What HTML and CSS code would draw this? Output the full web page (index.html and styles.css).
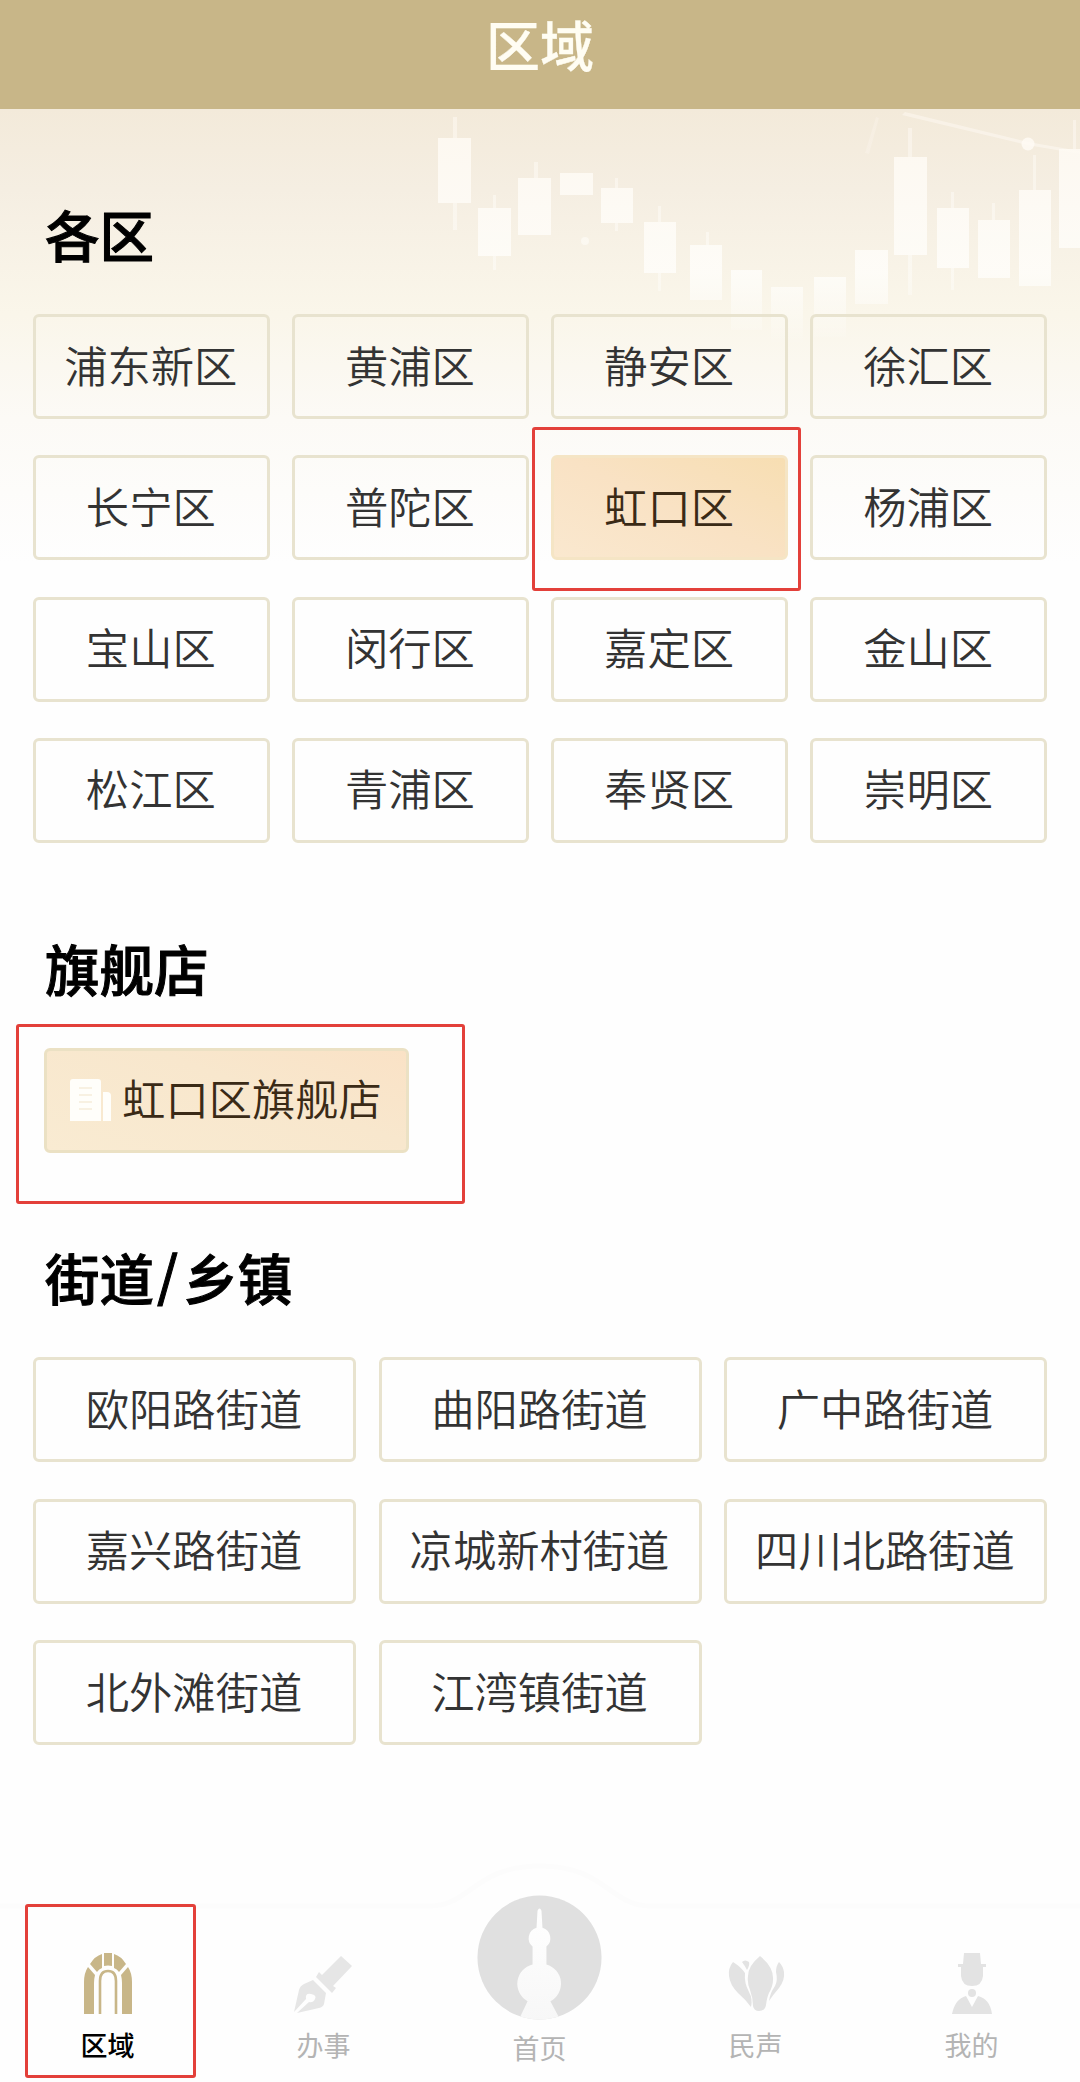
FILE: index.html
```html
<!DOCTYPE html>
<html lang="zh-CN">
<head>
  <meta charset="UTF-8" />
  <meta name="viewport" content="width=device-width, initial-scale=1.0" />
  <title>区域</title>
  <link rel="stylesheet" href="styles.css">
</head>
<body>
  <div class="page">
    <header class="header">区域</header>
    <main class="content">
      <svg class="chart" viewBox="400 108 680 240" aria-hidden="true">
        <defs>
          <linearGradient id="fade" gradientUnits="userSpaceOnUse" x1="0" y1="108" x2="0" y2="345">
            <stop offset="0" stop-color="#fffaf3" stop-opacity=".85" />
            <stop offset=".7" stop-color="#fffefb" stop-opacity=".8" />
            <stop offset="1" stop-color="#fff" stop-opacity="0" />
          </linearGradient>
        </defs>
        <g fill="url(#fade)">
          <path d="M438 138h33v65h-33zM478 208h33v48h-33zM518 178h33v57h-33zM560 173h33v22h-33zM601 188h32v35h-32zM644 222h32v51h-32zM690 245h32v55h-32zM731 270h31v60h-31zM771 287h32v55h-32zM814 277h32v60h-32zM855 250h33v54h-33zM894 157h33v98h-33zM937 208h32v60h-32zM978 220h32v58h-32zM1019 190h32v96h-32zM1059 149h21v99h-21z" />
          <g opacity=".6">
            <path d="M453 117h4v21h-4zM453 203h4v27h-4zM493 195h3v13h-3zM493 256h3v14h-3zM534 162h4v16h-4zM615 178h3v10h-3zM615 223h3v8h-3zM658 206h3v16h-3zM658 273h3v18h-3zM706 232h3v13h-3zM908 128h4v29h-4zM908 255h4v40h-4zM951 192h3v16h-3zM951 268h3v22h-3zM992 203h3v17h-3zM1033 155h3v35h-3zM1073 120h3v29h-3z" />
            <path d="M905 112l123 30 52 9v3l-53-9-125-30z" />
            <path d="M876 117l3 1-10 36-4-1z" opacity=".5" />
          </g>
          <circle cx="1028" cy="144" r="6.5" />
          <circle cx="585" cy="241" r="4" opacity=".7" />
        </g>
      </svg>

      <section class="section">
        <h2 class="title">各区</h2>
        <div class="grid grid-4">
          <div class="item">浦东新区</div>
          <div class="item">黄浦区</div>
          <div class="item">静安区</div>
          <div class="item">徐汇区</div>
          <div class="item">长宁区</div>
          <div class="item">普陀区</div>
          <div class="item active">虹口区<span class="mark mark-district"></span></div>
          <div class="item">杨浦区</div>
          <div class="item">宝山区</div>
          <div class="item">闵行区</div>
          <div class="item">嘉定区</div>
          <div class="item">金山区</div>
          <div class="item">松江区</div>
          <div class="item">青浦区</div>
          <div class="item">奉贤区</div>
          <div class="item">崇明区</div>
        </div>
      </section>

      <section class="section">
        <h2 class="title">旗舰店</h2>
        <div class="item store">
          <svg class="store-icon" viewBox="0 0 42 42">
            <path d="M3 0h25q3 0 3 3v39H0V3q0-3 3-3z" fill="#fffefa" />
            <path d="M33 13h4q4 0 4 4v25h-8z" fill="#fffefa" />
            <path d="M9 9h13M9 16h13M9 23h13M9 30h13" stroke="#f8f1e2" stroke-width="2" />
          </svg>
          <span>虹口区旗舰店</span>
          <span class="mark mark-store"></span>
        </div>
      </section>

      <section class="section">
        <h2 class="title">街道<span class="slash">/</span>乡镇</h2>
        <div class="grid grid-3">
          <div class="item">欧阳路街道</div>
          <div class="item">曲阳路街道</div>
          <div class="item">广中路街道</div>
          <div class="item">嘉兴路街道</div>
          <div class="item">凉城新村街道</div>
          <div class="item">四川北路街道</div>
          <div class="item">北外滩街道</div>
          <div class="item">江湾镇街道</div>
        </div>
      </section>
    </main>

    <nav class="tabbar">
      <svg class="tabbar-edge" viewBox="0 0 1080 60" aria-hidden="true">
        <path d="M0 48H430C470 48 475 8 540 8S610 48 650 48H1080" fill="none" stroke="#fcfcfc" stroke-width="5" />
      </svg>
      <a class="tab current">
        <svg class="tab-icon" viewBox="0 0 62 62">
          <g fill="#c8b688">
            <path d="M7 62V30Q7 21 11 15L18 23Q17 27 17 31V62z" />
            <path d="M55 62V30Q55 21 51 15L44 23Q45 27 45 31V62z" />
            <path d="M13 12Q18 4 25 2V16Q22 17 20 20z" />
            <path d="M49 12Q44 4 37 2V16Q40 17 42 20z" />
            <path d="M27 1H35V14Q31 13 27 14z" />
          </g>
          <path d="M23 62V29Q23 19 31 19T39 29V62" fill="none" stroke="#c8b688" stroke-width="2.6" />
        </svg>
        <span>区域</span>
        <span class="mark mark-tab"></span>
      </a>
      <a class="tab">
        <svg class="tab-icon" viewBox="0 0 62 62">
          <g fill="#e6e6e6">
            <path d="M48 4L59 14L40 34L43 36L39 41L23 25L26 20L29 23z" />
            <path d="M20 28L33 41L31 52Q30 55 26 56L4 61L16 50Q20 51 22 47T18 42T13 47L1 60L6 38Q7 34 11 32z" />
          </g>
        </svg>
        <span>办事</span>
      </a>
      <a class="tab home">
        <svg class="home-icon" viewBox="0 0 126 126">
          <defs>
            <clipPath id="round"><circle cx="63" cy="63" r="62.5" /></clipPath>
            <linearGradient id="tower" x1="0" y1="0" x2="0" y2="1">
              <stop offset="0" stop-color="#fff" />
              <stop offset="1" stop-color="#f7f7f7" />
            </linearGradient>
          </defs>
          <circle cx="63" cy="63" r="62.5" fill="#e0e0e0" />
          <path clip-path="url(#round)" fill="url(#tower)" d="M61 16Q63 11 65 16L66 33A11 11 0 0 1 70 52V70A20 20 0 0 1 74 107L84 126H42L51 107A20 20 0 0 1 56 70V52A11 11 0 0 1 60 33z" />
        </svg>
        <span>首页</span>
      </a>
      <a class="tab">
        <svg class="tab-icon" viewBox="0 0 62 62">
          <g fill="#e3e3e3">
            <path d="M35 4Q49 15 48 28Q48 34 44 41Q42 45 41 53Q40 59 34 59Q29 59 28 54Q28 46 25 38Q22 31 23 24Q23 14 35 4z" />
            <path d="M8 10Q3 16 4 24Q5 33 13 41Q20 47 26 55Q28 47 24 40Q19 31 20 21Q16 15 8 10z" />
            <path d="M54 10Q51 14 51 20Q53 28 50 34Q45 41 44 49Q48 43 54 36Q60 28 59 20Q58 14 54 10z" />
            <path d="M17 10Q20 7 24 10Q25 13 22 18Q20 14 17 10z" />
          </g>
        </svg>
        <span>民声</span>
      </a>
      <a class="tab">
        <svg class="tab-icon" viewBox="0 0 62 62">
          <g fill="#e3e3e3">
            <path d="M23 1H39L40 12H45V15H42V24Q41 34 31 34T20 24V15H17V12H22z" />
            <circle cx="31" cy="41" r="4" />
            <path d="M25 44L31 55L37 44Q49 47 51 62H11Q14 47 25 44z" />
          </g>
        </svg>
        <span>我的</span>
      </a>
    </nav>
  </div>
</body>
</html>
```
FILE: styles.css
```css
* { box-sizing: border-box; }
html, body { margin: 0; padding: 0; }
body { background: #fefefe; color: #333; font-family: "Noto Sans CJK SC", "Liberation Sans", sans-serif; }
.page { width: 1080px; height: 2082px; margin: 0 auto; display: flex; flex-direction: column; overflow: hidden; }
.header { height: 109px; padding-top: 8px; flex: none; background: #c8b688; color: #fffdf3; font-size: 54px; font-weight: 500; line-height: 72px; text-align: center; -webkit-text-stroke: 0.3px; }
.content { position: relative; flex: 1; padding: 95px 33px 0; background: linear-gradient(#f3eada 0, #f5eee2 80px, #faf6ea 205px, #fcfaf6 310px, #fefefe 455px); }
.chart { position: absolute; top: -1px; right: 0; width: 680px; height: 240px; }
.section { position: relative; margin-bottom: 94.8px; }
.title { margin: 0 0 50px; padding-left: 12px; color: #000; font-size: 54.5px; font-weight: 500; line-height: 60px; -webkit-text-stroke: 1px; }
.slash { display: inline-block; margin: 0 5px 0 3px; transform: translateY(-4px); }

.grid { display: grid; column-gap: 22.5px; row-gap: 36.3px; }
.grid-4 { grid-template-columns: repeat(4, 1fr); }
.grid-3 { grid-template-columns: repeat(3, 1fr); }
.item { position: relative; display: flex; align-items: center; justify-content: center; height: 105px; padding: 0 1px 6px 0; border: 3px solid #e8e3cf; border-radius: 6px; font-size: 43.3px; font-weight: 350; line-height: 60px; white-space: nowrap; }
.item.active { background: linear-gradient(25deg, #fae8cf, #f9e2c4 50%, #f7deb2); border-color: #f5e5c5; color: #3a2a16; }
.item.store { width: 365px; margin-left: 11px; gap: 10px; background: linear-gradient(20deg, #f9ebd2, #f8e7cd 60%, #fae2c6); border-color: #ebe1c4; color: #3a2a16; }
.store-icon { width: 42px; height: 42px; margin-top: 5px; }

/* red outlines over the highlighted entries */
.mark { position: absolute; border: 3px solid #e3403a; border-radius: 3px; pointer-events: none; }
.mark-district { top: -31px; left: -22px; width: 269px; height: 164px; }
.mark-store { top: -27px; left: -31px; width: 449px; height: 180px; }
.mark-tab { top: 0; left: 25px; width: 171px; height: 174px; }

.tabbar { position: relative; display: grid; grid-template-columns: repeat(5, 1fr); height: 178px; flex: none; }
.tabbar-edge { position: absolute; top: -46px; left: 0; width: 1080px; height: 60px; }
.tab { position: relative; display: flex; flex-direction: column; align-items: center; padding: 48px 1px 0 0; color: #b4b4b4; font-size: 27px; line-height: 36px; }
.tab.current { color: #000; font-weight: 500; }
.tab-icon { width: 62px; height: 62px; margin-bottom: 13px; }
.tab.home { padding-top: 0; }
.home-icon { width: 125px; height: 125px; margin: -9px 0 10px; }
```
